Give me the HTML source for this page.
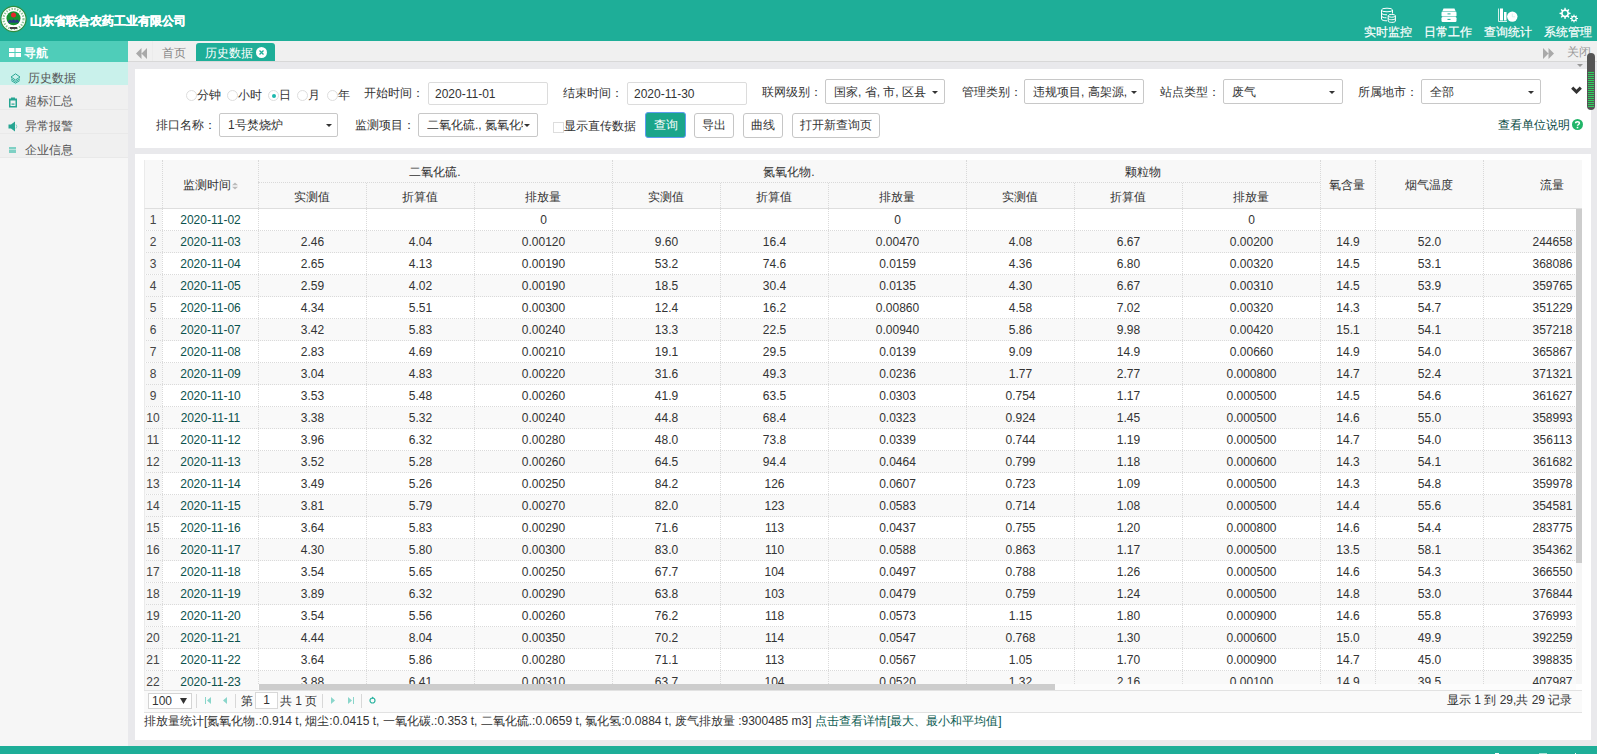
<!DOCTYPE html>
<html><head><meta charset="utf-8"><title>历史数据</title><style>
*{box-sizing:border-box;margin:0;padding:0}
html,body{width:1597px;height:754px;overflow:hidden}
body{position:relative;background:#e9e9ec;font-family:"Liberation Sans",sans-serif;font-size:12px;color:#333}
.abs{position:absolute}
#hdr{position:absolute;left:0;top:0;width:1597px;height:41px;background:#1eae98}
#ftr{position:absolute;left:0;top:746px;width:1597px;height:8px;background:#1eae98}
.title{position:absolute;left:30px;top:14px;-webkit-text-stroke:0.35px #fff;color:#fff;font-size:12px;font-weight:bold;line-height:15px;white-space:nowrap}
.menu{position:absolute;top:26px;color:#fff;-webkit-text-stroke:0.2px #fff;font-size:12px;line-height:13px;white-space:nowrap}
#side{position:absolute;left:0;top:41px;width:128px;height:705px;background:#f6f6f6}
.navh{position:absolute;left:0;top:0;width:128px;height:21px;background:#4fcdb9;color:#fff;font-weight:bold;font-size:12px}
.item{position:absolute;left:0;width:128px;height:24px;background:#f0f0f0;border-bottom:1px solid #e9e9e9;color:#555;line-height:23px}
.item.act{background:#c9f1eb;border-bottom:none;line-height:23px}
.item span{position:absolute;left:24px;top:5px}
#tabs{position:absolute;left:128px;top:41px;width:1469px;height:21px;background:#f0f0f0;border-bottom:1px solid #d8d8d8}
.panel{position:absolute;background:#fff}
.lbl{position:absolute;white-space:nowrap;color:#333;line-height:14px}
.inp{position:absolute;border:1px solid #dcdcdc;border-radius:2px;background:#fff;color:#333;padding-left:6px;white-space:nowrap;overflow:hidden}
.sel{position:absolute;border:1px solid #c8c8c8;border-radius:2px;background:#fff;color:#333;padding-left:8px;white-space:nowrap;overflow:hidden}
.caret{position:absolute;width:0;height:0;border-left:3px solid transparent;border-right:3px solid transparent;border-top:3px solid #333}
.btn{position:absolute;border:1px solid #c6c6c6;border-radius:3px;background:#fff;color:#333;text-align:center;line-height:22px;white-space:nowrap}
.radio{position:absolute;width:11px;height:11px;border:1px solid #dedede;border-radius:50%;background:#fff}
.th{position:absolute;text-align:center;color:#333;white-space:nowrap;line-height:14px}
.vd{position:absolute;width:0;border-left:1px dotted #d9d9d9}
.hd{position:absolute;height:0;border-top:1px dotted #d9d9d9}
#tb{position:absolute;left:144px;top:209px;width:1432px;height:481px;overflow:hidden}
.r{position:absolute;left:0;width:1477px;height:22px;background:#fff;border-bottom:1px dotted #dadada}
.r.alt{background:#f9f9f9}
.c{position:absolute;top:0;height:21px;line-height:23px;text-align:center;color:#333;white-space:nowrap;border-left:1px dotted #dadada}
.cn{border-left:none;background:#f7f7f7;color:#444}
.cd{color:#0b524c}

</style></head><body>
<div id="hdr">
  <svg class="abs" style="left:0;top:5px" width="28" height="28" viewBox="0 0 28 28">
    <circle cx="13.5" cy="14" r="12.6" fill="#fff" stroke="#2f8f3f" stroke-width="1.2"/>
    <circle cx="13.5" cy="14" r="10" fill="none" stroke="#8cc493" stroke-width="2.2" stroke-dasharray="1.4 1.4"/>
    <circle cx="13.5" cy="13.2" r="7" fill="#14922f"/>
    <circle cx="13.5" cy="10" r="2.5" fill="#e5262a"/>
    <path d="M8 16.5 L10 14.2 L11.7 16 L13.5 14 L15.3 16 L17 14.2 L19 16.5 Z" fill="#2a2f8f"/>
    <rect x="8" y="16.3" width="11" height="1.3" fill="#2a2f8f"/>
    <rect x="10" y="22" width="7" height="2" fill="#444"/>
  </svg>
  <div class="title">山东省联合农药工业有限公司</div>
  <!-- menu icons -->
  <svg class="abs" style="left:1380px;top:7px" width="18" height="16" viewBox="0 0 18 16">
    <g fill="none" stroke="#fff" stroke-width="1">
      <ellipse cx="7" cy="3" rx="5.5" ry="1.8"/>
      <path d="M1.5 3 V12 C1.5 13.2 4 13.8 7 13.8 M12.5 3 V6.5"/>
      <path d="M1.5 6 C1.5 7.2 4 7.8 7 7.8 M1.5 9 C1.5 10.2 4 10.8 6.5 10.8"/>
      <ellipse cx="11.8" cy="8.8" rx="3.6" ry="1.4"/>
      <path d="M8.2 8.8 V14 C8.2 15 10 15.4 11.8 15.4 C13.6 15.4 15.4 15 15.4 14 V8.8 M8.2 11.3 C8.2 12.3 10 12.7 11.8 12.7 C13.6 12.7 15.4 12.3 15.4 11.3"/>
    </g>
  </svg>
  <div class="menu" style="left:1364px">实时监控</div>
  <svg class="abs" style="left:1441px;top:8px" width="16" height="15" viewBox="0 0 16 15">
    <path d="M2.5 0.5 H13.5 L14.5 3 H1.5 Z" fill="#fff"/>
    <rect x="0.5" y="3.5" width="15" height="5" rx="1.2" fill="#fff"/>
    <rect x="0.5" y="9" width="15" height="5" rx="1.2" fill="#fff"/>
    <rect x="6.5" y="5.4" width="3" height="1" fill="#1eae98"/>
    <rect x="6.5" y="10.9" width="3" height="1" fill="#1eae98"/>
  </svg>
  <div class="menu" style="left:1424px">日常工作</div>
  <svg class="abs" style="left:1497px;top:8px" width="22" height="15" viewBox="0 0 22 15">
    <path d="M1.5 0.5 V13.5 H10" fill="none" stroke="#fff" stroke-width="0.8"/>
    <rect x="3" y="0.5" width="3" height="12" fill="#fff"/>
    <rect x="7" y="4" width="2.5" height="8.5" fill="#fff"/>
    <circle cx="15.3" cy="8.6" r="5.2" fill="#fff"/>
    <path d="M15.3 5.5 V8.8 H18" fill="none" stroke="#c9eee8" stroke-width="0.7"/>
  </svg>
  <div class="menu" style="left:1484px">查询统计</div>
  <svg class="abs" style="left:1557px;top:7px" width="22" height="17" viewBox="0 0 22 17">
    <g fill="#fff">
      <path id="g1" d="M7.5 0.8 L8.6 0.8 L8.9 2.5 L10.2 3 L11.6 2 L12.4 2.8 L11.4 4.2 L11.9 5.5 L13.6 5.8 V6.9 L11.9 7.2 L11.4 8.5 L12.4 9.9 L11.6 10.7 L10.2 9.7 L8.9 10.2 L8.6 11.9 H7.5 L7.2 10.2 L5.9 9.7 L4.5 10.7 L3.7 9.9 L4.7 8.5 L4.2 7.2 L2.5 6.9 V5.8 L4.2 5.5 L4.7 4.2 L3.7 2.8 L4.5 2 L5.9 3 L7.2 2.5 Z M8.05 4 A2.35 2.35 0 1 0 8.05 8.7 A2.35 2.35 0 1 0 8.05 4 Z" fill-rule="evenodd"/>
      <path d="M16.6 7.5 H17.4 L17.6 8.7 L18.5 9.1 L19.5 8.4 L20.1 9 L19.4 10 L19.8 10.9 L21 11.1 V11.9 L19.8 12.1 L19.4 13 L20.1 14 L19.5 14.6 L18.5 13.9 L17.6 14.3 L17.4 15.5 H16.6 L16.4 14.3 L15.5 13.9 L14.5 14.6 L13.9 14 L14.6 13 L14.2 12.1 L13 11.9 V11.1 L14.2 10.9 L14.6 10 L13.9 9 L14.5 8.4 L15.5 9.1 L16.4 8.7 Z M17 9.9 A1.6 1.6 0 1 0 17 13.1 A1.6 1.6 0 1 0 17 9.9 Z" fill-rule="evenodd"/>
    </g>
  </svg>
  <div class="menu" style="left:1544px">系统管理</div>
</div>

<div id="side">
  <div class="navh">
    <svg class="abs" style="left:9px;top:7px" width="12" height="9" viewBox="0 0 12 9">
      <rect x="0" y="0" width="5.5" height="4" fill="#fff"/><rect x="6.5" y="0" width="5.5" height="4" fill="#fff"/>
      <rect x="0" y="5" width="5.5" height="4" fill="#fff"/><rect x="6.5" y="5" width="5.5" height="4" fill="#fff"/>
    </svg>
    <span class="abs" style="left:24px;top:5px;line-height:14px">导航</span>
  </div>
  <div class="item act" style="top:21px;height:23px">
    <svg class="abs" style="left:10px;top:11px" width="11" height="11" viewBox="0 0 11 11">
      <g fill="none" stroke="#2aa795" stroke-width="1">
        <path d="M5.5 0.8 L10 4 L5.5 7 L1 4 Z"/>
        <path d="M1 5.8 L5.5 8.6 L10 5.8"/>
        <path d="M1.3 7.6 L5.5 10.2 L9.7 7.6"/>
      </g>
    </svg>
    <span style="left:28px">历史数据</span>
  </div>
  <div class="item" style="top:44px;height:25px">
    <svg class="abs" style="left:8px;top:12px" width="10" height="11" viewBox="0 0 10 11">
      <path d="M1 1.5 H3 V0.5 H7 V1.5 H9 V10.5 H1 Z" fill="#26a592"/>
      <rect x="2.5" y="3.5" width="5" height="5.5" fill="#f0f0f0"/>
      <rect x="3.5" y="6.5" width="3" height="1.2" fill="#26a592"/>
    </svg>
    <span style="left:25px">超标汇总</span>
  </div>
  <div class="item" style="top:69px">
    <svg class="abs" style="left:8px;top:11px" width="10" height="11" viewBox="0 0 10 11">
      <path d="M0.5 3.5 H3 L7 0.5 V10.5 L3 7.5 H0.5 Z" fill="#26a592"/>
      <path d="M8 3.5 Q9.5 5.5 8 7.5" fill="none" stroke="#7fd0c4" stroke-width="1"/>
    </svg>
    <span style="left:25px">异常报警</span>
  </div>
  <div class="item" style="top:93px">
    <svg class="abs" style="left:9px;top:13px" width="8" height="7" viewBox="0 0 8 7">
      <rect x="0" y="0" width="7" height="6" fill="#7fd0c4"/>
      <rect x="0" y="2" width="7" height="1" fill="#b9e5de"/>
    </svg>
    <span style="left:25px">企业信息</span>
  </div>
</div>

<div id="tabs">
  <svg class="abs" style="left:8px;top:7px" width="12" height="11" viewBox="0 0 12 11">
    <path d="M5.5 0 V11 L0 5.5 Z M11 0 V11 L5.5 5.5 Z" fill="#a9a9a9"/>
  </svg>
  <div class="abs" style="left:24px;top:0;width:1px;height:20px;background:#ebebeb"></div>
  <span class="abs" style="left:34px;top:5px;color:#888;line-height:14px">首页</span>
  <div class="abs" style="left:68px;top:2px;width:79px;height:18px;background:#1eae98;border-radius:3px 3px 0 0"></div>
  <span class="abs" style="left:77px;top:5px;color:#fff;line-height:14px">历史数据</span>
  <svg class="abs" style="left:128px;top:6px" width="11" height="11" viewBox="0 0 11 11">
    <circle cx="5.5" cy="5.5" r="5.5" fill="#fff"/>
    <path d="M3.5 3.5 L7.5 7.5 M7.5 3.5 L3.5 7.5" stroke="#1eae98" stroke-width="1.3"/>
  </svg>
  <svg class="abs" style="left:1415px;top:7px" width="12" height="11" viewBox="0 0 12 11">
    <path d="M0 0 V11 L5.5 5.5 Z M5.5 0 V11 L11 5.5 Z" fill="#a9a9a9"/>
  </svg>
  <span class="abs" style="left:1439px;top:4px;color:#999;line-height:14px">关闭</span>
</div>
<div class="abs" style="left:1577px;top:64px;width:0;height:0;border-left:3px solid transparent;border-right:3px solid transparent;border-top:3px solid #999"></div>

<!-- filter panel -->
<div class="panel" style="left:135px;top:69px;width:1456px;height:79px"></div>
<div class="radio" style="left:186px;top:90px"></div><span class="lbl" style="left:197px;top:88px">分钟</span>
<div class="radio" style="left:227px;top:90px"></div><span class="lbl" style="left:238px;top:88px">小时</span>
<div class="radio" style="left:268px;top:90px"></div><div class="abs" style="left:271.5px;top:93.5px;width:4px;height:4px;border-radius:50%;background:#1db8ae"></div><span class="lbl" style="left:279px;top:88px">日</span>
<div class="radio" style="left:297px;top:90px"></div><span class="lbl" style="left:308px;top:88px">月</span>
<div class="radio" style="left:327px;top:90px"></div><span class="lbl" style="left:338px;top:88px">年</span>

<span class="lbl" style="left:364px;top:86px">开始时间：</span>
<div class="inp" style="left:428px;top:82px;width:120px;height:23px;line-height:23px">2020-11-01</div>
<span class="lbl" style="left:563px;top:86px">结束时间：</span>
<div class="inp" style="left:627px;top:82px;width:120px;height:23px;line-height:23px">2020-11-30</div>

<span class="lbl" style="left:762px;top:85px">联网级别：</span>
<div class="sel" style="left:825px;top:79px;width:120px;height:25px;line-height:25px">国家, 省, 市, 区县</div><div class="caret" style="left:932px;top:91px"></div>
<span class="lbl" style="left:962px;top:85px">管理类别：</span>
<div class="sel" style="left:1024px;top:79px;width:120px;height:25px;line-height:25px;padding-right:16px">违规项目, 高架源,</div><div class="caret" style="left:1131px;top:91px"></div>
<span class="lbl" style="left:1160px;top:85px">站点类型：</span>
<div class="sel" style="left:1223px;top:79px;width:120px;height:25px;line-height:25px">废气</div><div class="caret" style="left:1329px;top:91px"></div>
<span class="lbl" style="left:1358px;top:85px">所属地市：</span>
<div class="sel" style="left:1421px;top:79px;width:120px;height:25px;line-height:25px">全部</div><div class="caret" style="left:1528px;top:91px"></div>
<svg class="abs" style="left:1571px;top:86px" width="11" height="8" viewBox="0 0 11 8">
  <path d="M1.2 1.6 L5.5 5.9 L9.8 1.6" fill="none" stroke="#333" stroke-width="3"/>
</svg>

<span class="lbl" style="left:156px;top:118px">排口名称：</span>
<div class="sel" style="left:219px;top:113px;width:119px;height:24px;line-height:22px">1号焚烧炉</div><div class="caret" style="left:326px;top:124px"></div>
<span class="lbl" style="left:355px;top:118px">监测项目：</span>
<div class="sel" style="left:418px;top:113px;width:120px;height:24px;line-height:22px"><div style="width:96px;overflow:hidden;white-space:nowrap">二氧化硫., 氮氧化物.</div></div><div class="caret" style="left:524px;top:124px"></div>
<div class="abs" style="left:553px;top:122px;width:11px;height:11px;border:1px solid #ddd;background:#fff"></div>
<span class="lbl" style="left:564px;top:119px">显示直传数据</span>
<div class="btn" style="left:645px;top:112px;width:41px;height:26px;background:#1aa58b;border-color:#5e9cf0;color:#fff;line-height:24px">查询</div>
<div class="btn" style="left:694px;top:113px;width:40px;height:25px">导出</div>
<div class="btn" style="left:743px;top:113px;width:40px;height:25px">曲线</div>
<div class="btn" style="left:792px;top:113px;width:88px;height:25px">打开新查询页</div>
<span class="lbl" style="left:1498px;top:118px;color:#07483f">查看单位说明</span>
<svg class="abs" style="left:1572px;top:119px" width="11" height="11" viewBox="0 0 11 11">
  <circle cx="5.5" cy="5.5" r="5.5" fill="#21b568"/>
  <path d="M3.6 4.2 C3.6 2.2 7.4 2.2 7.4 4.2 C7.4 5.5 5.5 5.5 5.5 6.8" fill="none" stroke="#fff" stroke-width="1.5"/>
  <rect x="4.7" y="7.8" width="1.6" height="1.5" fill="#fff"/>
</svg>
<!-- scroll widget -->
<div class="abs" style="left:1587px;top:53px;width:8px;height:57px;border-radius:4px;background:#555"></div>
<div class="abs" style="left:1588px;top:72px;width:6px;height:35px;background:repeating-linear-gradient(#2bd35c 0 1px,#555 1px 2px)"></div>

<!-- table panel -->
<div class="panel" style="left:135px;top:154px;width:1456px;height:586px"></div>
<div class="abs" style="left:144px;top:160px;width:1438px;height:49px;background:#f8f8f8;border-bottom:1px solid #dedede;border-left:1px solid #ebebeb"></div>
<div class="abs" style="left:144px;top:209px;width:1px;height:481px;background:#ebebeb;z-index:2"></div>
<div class="vd" style="left:162px;top:160px;height:48px"></div>
<div class="vd" style="left:258px;top:160px;height:48px"></div>
<div class="vd" style="left:612px;top:160px;height:48px"></div>
<div class="vd" style="left:966px;top:160px;height:48px"></div>
<div class="vd" style="left:1320px;top:160px;height:48px"></div>
<div class="vd" style="left:1375px;top:160px;height:48px"></div>
<div class="vd" style="left:1483px;top:160px;height:48px"></div>
<div class="vd" style="left:366px;top:183px;height:25px"></div>
<div class="vd" style="left:474px;top:183px;height:25px"></div>
<div class="vd" style="left:720px;top:183px;height:25px"></div>
<div class="vd" style="left:828px;top:183px;height:25px"></div>
<div class="vd" style="left:1074px;top:183px;height:25px"></div>
<div class="vd" style="left:1182px;top:183px;height:25px"></div>
<div class="hd" style="left:258px;top:182px;width:1062px"></div>
<div class="th" style="left:140px;top:178px;width:140px">监测时间<svg width="6" height="8" viewBox="0 0 6 8" style="margin-left:1px;vertical-align:-1px"><path d="M0 3.2 L3 0.5 L6 3.2 Z M0 4.8 L3 7.5 L6 4.8 Z" fill="#bbb"/></svg></div>
<div class="th" style="left:365px;top:165px;width:140px">二氧化硫.</div>
<div class="th" style="left:242px;top:190px;width:140px">实测值</div>
<div class="th" style="left:350px;top:190px;width:140px">折算值</div>
<div class="th" style="left:473px;top:190px;width:140px">排放量</div>
<div class="th" style="left:719px;top:165px;width:140px">氮氧化物.</div>
<div class="th" style="left:596px;top:190px;width:140px">实测值</div>
<div class="th" style="left:704px;top:190px;width:140px">折算值</div>
<div class="th" style="left:827px;top:190px;width:140px">排放量</div>
<div class="th" style="left:1073px;top:165px;width:140px">颗粒物</div>
<div class="th" style="left:950px;top:190px;width:140px">实测值</div>
<div class="th" style="left:1058px;top:190px;width:140px">折算值</div>
<div class="th" style="left:1181px;top:190px;width:140px">排放量</div>
<div class="th" style="left:1277px;top:178px;width:140px">氧含量</div>
<div class="th" style="left:1359px;top:178px;width:140px">烟气温度</div>
<div class="th" style="left:1482px;top:178px;width:140px">流量</div>
<div id="tb">
<div class="r" style="top:0px"><div class="c cn" style="left:0;width:18px">1</div><div class="c cd" style="left:18px;width:96px">2020-11-02</div><div class="c" style="left:114px;width:108px"></div><div class="c" style="left:222px;width:108px"></div><div class="c" style="left:330px;width:138px">0</div><div class="c" style="left:468px;width:108px"></div><div class="c" style="left:576px;width:108px"></div><div class="c" style="left:684px;width:138px">0</div><div class="c" style="left:822px;width:108px"></div><div class="c" style="left:930px;width:108px"></div><div class="c" style="left:1038px;width:138px">0</div><div class="c" style="left:1176px;width:55px"></div><div class="c" style="left:1231px;width:108px"></div><div class="c" style="left:1339px;width:138px"></div></div>
<div class="r alt" style="top:22px"><div class="c cn" style="left:0;width:18px">2</div><div class="c cd" style="left:18px;width:96px">2020-11-03</div><div class="c" style="left:114px;width:108px">2.46</div><div class="c" style="left:222px;width:108px">4.04</div><div class="c" style="left:330px;width:138px">0.00120</div><div class="c" style="left:468px;width:108px">9.60</div><div class="c" style="left:576px;width:108px">16.4</div><div class="c" style="left:684px;width:138px">0.00470</div><div class="c" style="left:822px;width:108px">4.08</div><div class="c" style="left:930px;width:108px">6.67</div><div class="c" style="left:1038px;width:138px">0.00200</div><div class="c" style="left:1176px;width:55px">14.9</div><div class="c" style="left:1231px;width:108px">52.0</div><div class="c" style="left:1339px;width:138px">244658</div></div>
<div class="r" style="top:44px"><div class="c cn" style="left:0;width:18px">3</div><div class="c cd" style="left:18px;width:96px">2020-11-04</div><div class="c" style="left:114px;width:108px">2.65</div><div class="c" style="left:222px;width:108px">4.13</div><div class="c" style="left:330px;width:138px">0.00190</div><div class="c" style="left:468px;width:108px">53.2</div><div class="c" style="left:576px;width:108px">74.6</div><div class="c" style="left:684px;width:138px">0.0159</div><div class="c" style="left:822px;width:108px">4.36</div><div class="c" style="left:930px;width:108px">6.80</div><div class="c" style="left:1038px;width:138px">0.00320</div><div class="c" style="left:1176px;width:55px">14.5</div><div class="c" style="left:1231px;width:108px">53.1</div><div class="c" style="left:1339px;width:138px">368086</div></div>
<div class="r alt" style="top:66px"><div class="c cn" style="left:0;width:18px">4</div><div class="c cd" style="left:18px;width:96px">2020-11-05</div><div class="c" style="left:114px;width:108px">2.59</div><div class="c" style="left:222px;width:108px">4.02</div><div class="c" style="left:330px;width:138px">0.00190</div><div class="c" style="left:468px;width:108px">18.5</div><div class="c" style="left:576px;width:108px">30.4</div><div class="c" style="left:684px;width:138px">0.0135</div><div class="c" style="left:822px;width:108px">4.30</div><div class="c" style="left:930px;width:108px">6.67</div><div class="c" style="left:1038px;width:138px">0.00310</div><div class="c" style="left:1176px;width:55px">14.5</div><div class="c" style="left:1231px;width:108px">53.9</div><div class="c" style="left:1339px;width:138px">359765</div></div>
<div class="r" style="top:88px"><div class="c cn" style="left:0;width:18px">5</div><div class="c cd" style="left:18px;width:96px">2020-11-06</div><div class="c" style="left:114px;width:108px">4.34</div><div class="c" style="left:222px;width:108px">5.51</div><div class="c" style="left:330px;width:138px">0.00300</div><div class="c" style="left:468px;width:108px">12.4</div><div class="c" style="left:576px;width:108px">16.2</div><div class="c" style="left:684px;width:138px">0.00860</div><div class="c" style="left:822px;width:108px">4.58</div><div class="c" style="left:930px;width:108px">7.02</div><div class="c" style="left:1038px;width:138px">0.00320</div><div class="c" style="left:1176px;width:55px">14.3</div><div class="c" style="left:1231px;width:108px">54.7</div><div class="c" style="left:1339px;width:138px">351229</div></div>
<div class="r alt" style="top:110px"><div class="c cn" style="left:0;width:18px">6</div><div class="c cd" style="left:18px;width:96px">2020-11-07</div><div class="c" style="left:114px;width:108px">3.42</div><div class="c" style="left:222px;width:108px">5.83</div><div class="c" style="left:330px;width:138px">0.00240</div><div class="c" style="left:468px;width:108px">13.3</div><div class="c" style="left:576px;width:108px">22.5</div><div class="c" style="left:684px;width:138px">0.00940</div><div class="c" style="left:822px;width:108px">5.86</div><div class="c" style="left:930px;width:108px">9.98</div><div class="c" style="left:1038px;width:138px">0.00420</div><div class="c" style="left:1176px;width:55px">15.1</div><div class="c" style="left:1231px;width:108px">54.1</div><div class="c" style="left:1339px;width:138px">357218</div></div>
<div class="r" style="top:132px"><div class="c cn" style="left:0;width:18px">7</div><div class="c cd" style="left:18px;width:96px">2020-11-08</div><div class="c" style="left:114px;width:108px">2.83</div><div class="c" style="left:222px;width:108px">4.69</div><div class="c" style="left:330px;width:138px">0.00210</div><div class="c" style="left:468px;width:108px">19.1</div><div class="c" style="left:576px;width:108px">29.5</div><div class="c" style="left:684px;width:138px">0.0139</div><div class="c" style="left:822px;width:108px">9.09</div><div class="c" style="left:930px;width:108px">14.9</div><div class="c" style="left:1038px;width:138px">0.00660</div><div class="c" style="left:1176px;width:55px">14.9</div><div class="c" style="left:1231px;width:108px">54.0</div><div class="c" style="left:1339px;width:138px">365867</div></div>
<div class="r alt" style="top:154px"><div class="c cn" style="left:0;width:18px">8</div><div class="c cd" style="left:18px;width:96px">2020-11-09</div><div class="c" style="left:114px;width:108px">3.04</div><div class="c" style="left:222px;width:108px">4.83</div><div class="c" style="left:330px;width:138px">0.00220</div><div class="c" style="left:468px;width:108px">31.6</div><div class="c" style="left:576px;width:108px">49.3</div><div class="c" style="left:684px;width:138px">0.0236</div><div class="c" style="left:822px;width:108px">1.77</div><div class="c" style="left:930px;width:108px">2.77</div><div class="c" style="left:1038px;width:138px">0.000800</div><div class="c" style="left:1176px;width:55px">14.7</div><div class="c" style="left:1231px;width:108px">52.4</div><div class="c" style="left:1339px;width:138px">371321</div></div>
<div class="r" style="top:176px"><div class="c cn" style="left:0;width:18px">9</div><div class="c cd" style="left:18px;width:96px">2020-11-10</div><div class="c" style="left:114px;width:108px">3.53</div><div class="c" style="left:222px;width:108px">5.48</div><div class="c" style="left:330px;width:138px">0.00260</div><div class="c" style="left:468px;width:108px">41.9</div><div class="c" style="left:576px;width:108px">63.5</div><div class="c" style="left:684px;width:138px">0.0303</div><div class="c" style="left:822px;width:108px">0.754</div><div class="c" style="left:930px;width:108px">1.17</div><div class="c" style="left:1038px;width:138px">0.000500</div><div class="c" style="left:1176px;width:55px">14.5</div><div class="c" style="left:1231px;width:108px">54.6</div><div class="c" style="left:1339px;width:138px">361627</div></div>
<div class="r alt" style="top:198px"><div class="c cn" style="left:0;width:18px">10</div><div class="c cd" style="left:18px;width:96px">2020-11-11</div><div class="c" style="left:114px;width:108px">3.38</div><div class="c" style="left:222px;width:108px">5.32</div><div class="c" style="left:330px;width:138px">0.00240</div><div class="c" style="left:468px;width:108px">44.8</div><div class="c" style="left:576px;width:108px">68.4</div><div class="c" style="left:684px;width:138px">0.0323</div><div class="c" style="left:822px;width:108px">0.924</div><div class="c" style="left:930px;width:108px">1.45</div><div class="c" style="left:1038px;width:138px">0.000500</div><div class="c" style="left:1176px;width:55px">14.6</div><div class="c" style="left:1231px;width:108px">55.0</div><div class="c" style="left:1339px;width:138px">358993</div></div>
<div class="r" style="top:220px"><div class="c cn" style="left:0;width:18px">11</div><div class="c cd" style="left:18px;width:96px">2020-11-12</div><div class="c" style="left:114px;width:108px">3.96</div><div class="c" style="left:222px;width:108px">6.32</div><div class="c" style="left:330px;width:138px">0.00280</div><div class="c" style="left:468px;width:108px">48.0</div><div class="c" style="left:576px;width:108px">73.8</div><div class="c" style="left:684px;width:138px">0.0339</div><div class="c" style="left:822px;width:108px">0.744</div><div class="c" style="left:930px;width:108px">1.19</div><div class="c" style="left:1038px;width:138px">0.000500</div><div class="c" style="left:1176px;width:55px">14.7</div><div class="c" style="left:1231px;width:108px">54.0</div><div class="c" style="left:1339px;width:138px">356113</div></div>
<div class="r alt" style="top:242px"><div class="c cn" style="left:0;width:18px">12</div><div class="c cd" style="left:18px;width:96px">2020-11-13</div><div class="c" style="left:114px;width:108px">3.52</div><div class="c" style="left:222px;width:108px">5.28</div><div class="c" style="left:330px;width:138px">0.00260</div><div class="c" style="left:468px;width:108px">64.5</div><div class="c" style="left:576px;width:108px">94.4</div><div class="c" style="left:684px;width:138px">0.0464</div><div class="c" style="left:822px;width:108px">0.799</div><div class="c" style="left:930px;width:108px">1.18</div><div class="c" style="left:1038px;width:138px">0.000600</div><div class="c" style="left:1176px;width:55px">14.3</div><div class="c" style="left:1231px;width:108px">54.1</div><div class="c" style="left:1339px;width:138px">361682</div></div>
<div class="r" style="top:264px"><div class="c cn" style="left:0;width:18px">13</div><div class="c cd" style="left:18px;width:96px">2020-11-14</div><div class="c" style="left:114px;width:108px">3.49</div><div class="c" style="left:222px;width:108px">5.26</div><div class="c" style="left:330px;width:138px">0.00250</div><div class="c" style="left:468px;width:108px">84.2</div><div class="c" style="left:576px;width:108px">126</div><div class="c" style="left:684px;width:138px">0.0607</div><div class="c" style="left:822px;width:108px">0.723</div><div class="c" style="left:930px;width:108px">1.09</div><div class="c" style="left:1038px;width:138px">0.000500</div><div class="c" style="left:1176px;width:55px">14.3</div><div class="c" style="left:1231px;width:108px">54.8</div><div class="c" style="left:1339px;width:138px">359978</div></div>
<div class="r alt" style="top:286px"><div class="c cn" style="left:0;width:18px">14</div><div class="c cd" style="left:18px;width:96px">2020-11-15</div><div class="c" style="left:114px;width:108px">3.81</div><div class="c" style="left:222px;width:108px">5.79</div><div class="c" style="left:330px;width:138px">0.00270</div><div class="c" style="left:468px;width:108px">82.0</div><div class="c" style="left:576px;width:108px">123</div><div class="c" style="left:684px;width:138px">0.0583</div><div class="c" style="left:822px;width:108px">0.714</div><div class="c" style="left:930px;width:108px">1.08</div><div class="c" style="left:1038px;width:138px">0.000500</div><div class="c" style="left:1176px;width:55px">14.4</div><div class="c" style="left:1231px;width:108px">55.6</div><div class="c" style="left:1339px;width:138px">354581</div></div>
<div class="r" style="top:308px"><div class="c cn" style="left:0;width:18px">15</div><div class="c cd" style="left:18px;width:96px">2020-11-16</div><div class="c" style="left:114px;width:108px">3.64</div><div class="c" style="left:222px;width:108px">5.83</div><div class="c" style="left:330px;width:138px">0.00290</div><div class="c" style="left:468px;width:108px">71.6</div><div class="c" style="left:576px;width:108px">113</div><div class="c" style="left:684px;width:138px">0.0437</div><div class="c" style="left:822px;width:108px">0.755</div><div class="c" style="left:930px;width:108px">1.20</div><div class="c" style="left:1038px;width:138px">0.000800</div><div class="c" style="left:1176px;width:55px">14.6</div><div class="c" style="left:1231px;width:108px">54.4</div><div class="c" style="left:1339px;width:138px">283775</div></div>
<div class="r alt" style="top:330px"><div class="c cn" style="left:0;width:18px">16</div><div class="c cd" style="left:18px;width:96px">2020-11-17</div><div class="c" style="left:114px;width:108px">4.30</div><div class="c" style="left:222px;width:108px">5.80</div><div class="c" style="left:330px;width:138px">0.00300</div><div class="c" style="left:468px;width:108px">83.0</div><div class="c" style="left:576px;width:108px">110</div><div class="c" style="left:684px;width:138px">0.0588</div><div class="c" style="left:822px;width:108px">0.863</div><div class="c" style="left:930px;width:108px">1.17</div><div class="c" style="left:1038px;width:138px">0.000500</div><div class="c" style="left:1176px;width:55px">13.5</div><div class="c" style="left:1231px;width:108px">58.1</div><div class="c" style="left:1339px;width:138px">354362</div></div>
<div class="r" style="top:352px"><div class="c cn" style="left:0;width:18px">17</div><div class="c cd" style="left:18px;width:96px">2020-11-18</div><div class="c" style="left:114px;width:108px">3.54</div><div class="c" style="left:222px;width:108px">5.65</div><div class="c" style="left:330px;width:138px">0.00250</div><div class="c" style="left:468px;width:108px">67.7</div><div class="c" style="left:576px;width:108px">104</div><div class="c" style="left:684px;width:138px">0.0497</div><div class="c" style="left:822px;width:108px">0.788</div><div class="c" style="left:930px;width:108px">1.26</div><div class="c" style="left:1038px;width:138px">0.000500</div><div class="c" style="left:1176px;width:55px">14.6</div><div class="c" style="left:1231px;width:108px">54.3</div><div class="c" style="left:1339px;width:138px">366550</div></div>
<div class="r alt" style="top:374px"><div class="c cn" style="left:0;width:18px">18</div><div class="c cd" style="left:18px;width:96px">2020-11-19</div><div class="c" style="left:114px;width:108px">3.89</div><div class="c" style="left:222px;width:108px">6.32</div><div class="c" style="left:330px;width:138px">0.00290</div><div class="c" style="left:468px;width:108px">63.8</div><div class="c" style="left:576px;width:108px">103</div><div class="c" style="left:684px;width:138px">0.0479</div><div class="c" style="left:822px;width:108px">0.759</div><div class="c" style="left:930px;width:108px">1.24</div><div class="c" style="left:1038px;width:138px">0.000500</div><div class="c" style="left:1176px;width:55px">14.8</div><div class="c" style="left:1231px;width:108px">53.0</div><div class="c" style="left:1339px;width:138px">376844</div></div>
<div class="r" style="top:396px"><div class="c cn" style="left:0;width:18px">19</div><div class="c cd" style="left:18px;width:96px">2020-11-20</div><div class="c" style="left:114px;width:108px">3.54</div><div class="c" style="left:222px;width:108px">5.56</div><div class="c" style="left:330px;width:138px">0.00260</div><div class="c" style="left:468px;width:108px">76.2</div><div class="c" style="left:576px;width:108px">118</div><div class="c" style="left:684px;width:138px">0.0573</div><div class="c" style="left:822px;width:108px">1.15</div><div class="c" style="left:930px;width:108px">1.80</div><div class="c" style="left:1038px;width:138px">0.000900</div><div class="c" style="left:1176px;width:55px">14.6</div><div class="c" style="left:1231px;width:108px">55.8</div><div class="c" style="left:1339px;width:138px">376993</div></div>
<div class="r alt" style="top:418px"><div class="c cn" style="left:0;width:18px">20</div><div class="c cd" style="left:18px;width:96px">2020-11-21</div><div class="c" style="left:114px;width:108px">4.44</div><div class="c" style="left:222px;width:108px">8.04</div><div class="c" style="left:330px;width:138px">0.00350</div><div class="c" style="left:468px;width:108px">70.2</div><div class="c" style="left:576px;width:108px">114</div><div class="c" style="left:684px;width:138px">0.0547</div><div class="c" style="left:822px;width:108px">0.768</div><div class="c" style="left:930px;width:108px">1.30</div><div class="c" style="left:1038px;width:138px">0.000600</div><div class="c" style="left:1176px;width:55px">15.0</div><div class="c" style="left:1231px;width:108px">49.9</div><div class="c" style="left:1339px;width:138px">392259</div></div>
<div class="r" style="top:440px"><div class="c cn" style="left:0;width:18px">21</div><div class="c cd" style="left:18px;width:96px">2020-11-22</div><div class="c" style="left:114px;width:108px">3.64</div><div class="c" style="left:222px;width:108px">5.86</div><div class="c" style="left:330px;width:138px">0.00280</div><div class="c" style="left:468px;width:108px">71.1</div><div class="c" style="left:576px;width:108px">113</div><div class="c" style="left:684px;width:138px">0.0567</div><div class="c" style="left:822px;width:108px">1.05</div><div class="c" style="left:930px;width:108px">1.70</div><div class="c" style="left:1038px;width:138px">0.000900</div><div class="c" style="left:1176px;width:55px">14.7</div><div class="c" style="left:1231px;width:108px">45.0</div><div class="c" style="left:1339px;width:138px">398835</div></div>
<div class="r alt" style="top:462px"><div class="c cn" style="left:0;width:18px">22</div><div class="c cd" style="left:18px;width:96px">2020-11-23</div><div class="c" style="left:114px;width:108px">3.88</div><div class="c" style="left:222px;width:108px">6.41</div><div class="c" style="left:330px;width:138px">0.00310</div><div class="c" style="left:468px;width:108px">63.7</div><div class="c" style="left:576px;width:108px">104</div><div class="c" style="left:684px;width:138px">0.0520</div><div class="c" style="left:822px;width:108px">1.32</div><div class="c" style="left:930px;width:108px">2.16</div><div class="c" style="left:1038px;width:138px">0.00100</div><div class="c" style="left:1176px;width:55px">14.9</div><div class="c" style="left:1231px;width:108px">39.5</div><div class="c" style="left:1339px;width:138px">407987</div></div>
</div>
<div class="abs" style="left:258px;top:684px;width:1318px;height:6px;background:#fcfcfc"></div>
<div class="abs" style="left:259px;top:684px;width:796px;height:6px;background:#cdcdcd"></div>
<div class="abs" style="left:1576px;top:209px;width:6px;height:475px;background:#f6f6f6"></div>
<div class="abs" style="left:1576px;top:209px;width:6px;height:354px;background:#cdcdcd"></div>
<div class="abs" style="left:1576px;top:684px;width:6px;height:6px;background:#fff"></div>

<!-- pager -->
<div class="abs" style="left:144px;top:690px;width:1438px;height:23px;background:#fafafa;border-top:1px solid #e2e2e2;border-bottom:1px solid #e2e2e2"></div>
<div class="abs" style="left:148px;top:693px;width:44px;height:16px;border:1px solid #d4d4d4;background:#fff;line-height:14px;padding-left:3px;color:#333">100<svg style="position:absolute;left:31px;top:4px" width="7" height="6" viewBox="0 0 7 6"><path d="M0 0 H7 L3.5 6 Z" fill="#333"/></svg></div>
<div class="abs" style="left:196px;top:694px;width:1px;height:14px;background:#d8d8d8"></div>
<svg class="abs" style="left:205px;top:697px" width="6" height="7" viewBox="0 0 6 7"><rect x="0" y="0" width="1" height="7" fill="#8ad6cb"/><path d="M6 0 V7 L2 3.5 Z" fill="#8ad6cb"/></svg>
<svg class="abs" style="left:223px;top:697px" width="5" height="7" viewBox="0 0 5 7"><path d="M4 0 V7 L0 3.5 Z" fill="#8ad6cb"/></svg>
<div class="abs" style="left:235px;top:694px;width:1px;height:14px;background:#d8d8d8"></div>
<span class="lbl" style="left:241px;top:694px">第</span>
<div class="abs" style="left:255px;top:692px;width:23px;height:17px;border:1px solid #d8d8d8;background:#fff;text-align:center;line-height:14px">1</div>
<span class="lbl" style="left:280px;top:694px">共 1 页</span>
<div class="abs" style="left:322px;top:694px;width:1px;height:14px;background:#d8d8d8"></div>
<svg class="abs" style="left:331px;top:697px" width="5" height="7" viewBox="0 0 5 7"><path d="M0 0 V7 L4 3.5 Z" fill="#8ad6cb"/></svg>
<svg class="abs" style="left:348px;top:697px" width="6" height="7" viewBox="0 0 6 7"><path d="M0 0 V7 L4 3.5 Z" fill="#8ad6cb"/><rect x="5" y="0" width="1" height="7" fill="#8ad6cb"/></svg>
<div class="abs" style="left:361px;top:694px;width:1px;height:14px;background:#d8d8d8"></div>
<svg class="abs" style="left:369px;top:696px" width="7" height="8" viewBox="0 0 7 8"><circle cx="3.5" cy="4.5" r="2.5" fill="none" stroke="#2bb3a0" stroke-width="1.2"/><path d="M3 0.5 L5 2 L3 3" fill="#2bb3a0"/></svg>
<span class="lbl" style="left:1447px;top:693px;color:#333">显示 1 到 29,共 29 记录</span>

<div class="lbl" style="left:144px;top:714px">排放量统计[氮氧化物.:0.914 t, 烟尘:0.0415 t, 一氧化碳.:0.353 t, 二氧化硫.:0.0659 t, 氯化氢:0.0884 t, 废气排放量 :9300485 m3] <span style="color:#0a5a50">点击查看详情[最大、最小和平均值]</span></div>

<div id="ftr"><div class="abs" style="left:1495px;top:7px;width:4px;height:1px;background:#fff"></div><div class="abs" style="left:1539px;top:7px;width:8px;height:1px;background:#a8e2d8"></div><div class="abs" style="left:1575px;top:7px;width:1px;height:1px;background:#fff"></div></div>

</body></html>
